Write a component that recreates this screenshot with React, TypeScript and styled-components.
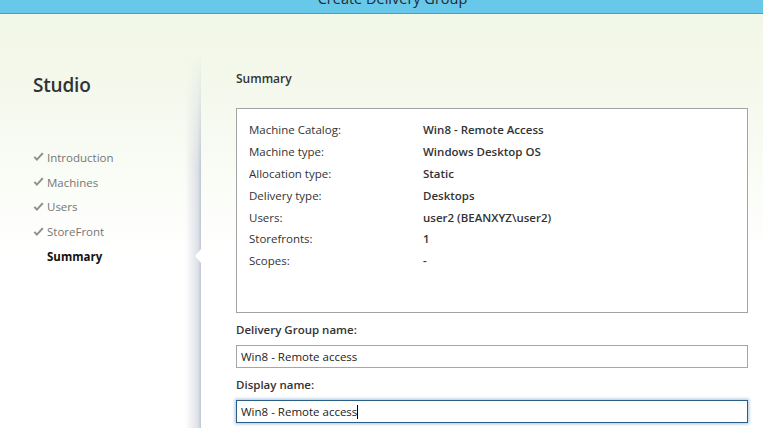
import React from "react";
import styled, { createGlobalStyle, css } from "styled-components";

const Global = createGlobalStyle`
  html, body { margin: 0; padding: 0; }
  body { font-family: "Open Sans", "Noto Sans", sans-serif; color: #333; }
`;

const Root = styled.div`
  width: 763px;
  height: 428px;
  overflow: hidden;
  display: flex;
  flex-direction: column;
  background: linear-gradient(180deg, #f1f7e5 0%, #f5f9ee 25%, #fbfdf8 45%, #ffffff 60%);
`;

const TitleBar = styled.div`
  height: 13px;
  flex: none;
  background: #67c8e9;
  border-bottom: 1px solid #4f9cbc;
  overflow: hidden;
  display: flex;
  justify-content: center;
`;

const TitleText = styled.div`
  font-size: 14.5px;
  line-height: 18px;
  margin-top: -10px;
  color: #1d2a33;
  padding-left: 22px;
`;

const Body = styled.div`
  flex: 1;
  display: flex;
`;

const Sidebar = styled.div`
  position: relative;
  width: 168px;
  flex: none;
  padding: 59px 0 0 33px;
  &::after {
    content: "";
    position: absolute;
    top: 40px;
    bottom: 0;
    right: 0;
    width: 16px;
    background: linear-gradient(90deg, rgba(200, 206, 218, 0) 0%, rgba(196, 202, 216, 0.55) 80%, rgba(180, 188, 204, 0.85) 100%);
    -webkit-mask-image: linear-gradient(180deg, transparent 0%, #000 30%, #000 100%);
    mask-image: linear-gradient(180deg, transparent 0%, #000 30%, #000 100%);
  }
`;

const Brand = styled.div`
  font-size: 19px;
  line-height: 24px;
  font-weight: 600;
  color: #333;
  letter-spacing: -0.2px;
`;

const Nav = styled.div`
  margin-top: 48px;
  display: flex;
  flex-direction: column;
`;

const NavItem = styled.div<{ $active?: boolean }>`
  position: relative;
  height: 24.75px;
  display: flex;
  align-items: center;
  font-size: 11.5px;
  color: #767676;
  ${(p) =>
    p.$active &&
    css`
      color: #111;
      font-weight: 700;
      &::after {
        content: "";
        position: absolute;
        right: 0;
        top: 50%;
        margin-top: -7px;
        width: 0;
        height: 0;
        border-top: 7px solid transparent;
        border-bottom: 7px solid transparent;
        border-right: 6px solid #ffffff;
        z-index: 2;
      }
    `}
`;

const CheckSlot = styled.span`
  width: 14px;
  flex: none;
  display: flex;
  align-items: center;
`;

const Main = styled.div`
  flex: 1;
  padding: 57px 15px 0 35px;
  display: flex;
  flex-direction: column;
`;

const Heading = styled.div`
  font-size: 12px;
  line-height: 16px;
  font-weight: 600;
  color: #333;
`;

const SummaryBox = styled.div`
  margin-top: 21px;
  border: 1px solid #a3a3a3;
  background: #fff;
  padding: 10px 0 0 12px;
  box-sizing: border-box;
  height: 205px;
`;

const Row = styled.div`
  display: grid;
  grid-template-columns: 174px 1fr;
  height: 21.8px;
  align-items: center;
  font-size: 11.5px;
`;

const Label = styled.span`
  color: #333;
`;

const Value = styled.span`
  color: #333;
  font-weight: 600;
`;

const FieldLabel = styled.div<{ $gap: number }>`
  margin-top: ${(p) => p.$gap}px;
  font-size: 11.5px;
  line-height: 16px;
  font-weight: 600;
  color: #333;
`;

const Field = styled.div<{ $focused?: boolean }>`
  margin-top: 7px;
  height: 23px;
  box-sizing: border-box;
  border: 1px solid #a6a6a6;
  background: #fff;
  display: flex;
  align-items: center;
  padding-left: 4px;
  font-size: 11.5px;
  color: #222;
  ${(p) =>
    p.$focused &&
    css`
      border-color: #2a5e86;
      box-shadow: 0 0 3px 1px rgba(90, 150, 200, 0.55);
    `}
`;

const Caret = styled.span`
  width: 1px;
  height: 14px;
  background: #000;
`;

const Check = () => (
  <svg width="11" height="10" viewBox="0 0 11 10">
    <path d="M0.6 5.4 L3.9 9 L10.6 1.8 L9 0.6 L3.9 6.2 L2.2 4.2 Z" fill="#8f8f8f" />
  </svg>
);

const rows: [string, string][] = [
  ["Machine Catalog:", "Win8 - Remote Access"],
  ["Machine type:", "Windows Desktop OS"],
  ["Allocation type:", "Static"],
  ["Delivery type:", "Desktops"],
  ["Users:", "user2 (BEANXYZ\\user2)"],
  ["Storefronts:", "1"],
  ["Scopes:", "-"],
];

const steps = ["Introduction", "Machines", "Users", "StoreFront"];

export default function App() {
  return (
    <Root>
      <Global />
      <TitleBar>
        <TitleText>Create Delivery Group</TitleText>
      </TitleBar>
      <Body>
        <Sidebar>
          <Brand>Studio</Brand>
          <Nav>
            {steps.map((s) => (
              <NavItem key={s}>
                <CheckSlot>
                  <Check />
                </CheckSlot>
                {s}
              </NavItem>
            ))}
            <NavItem $active>
              <CheckSlot />
              Summary
            </NavItem>
          </Nav>
        </Sidebar>
        <Main>
          <Heading>Summary</Heading>
          <SummaryBox>
            {rows.map(([l, v]) => (
              <Row key={l}>
                <Label>{l}</Label>
                <Value>{v}</Value>
              </Row>
            ))}
          </SummaryBox>
          <FieldLabel $gap={9}>Delivery Group name:</FieldLabel>
          <Field>Win8 - Remote access</Field>
          <FieldLabel $gap={9}>Display name:</FieldLabel>
          <Field $focused>
            Win8 - Remote access
            <Caret />
          </Field>
        </Main>
      </Body>
    </Root>
  );
}
